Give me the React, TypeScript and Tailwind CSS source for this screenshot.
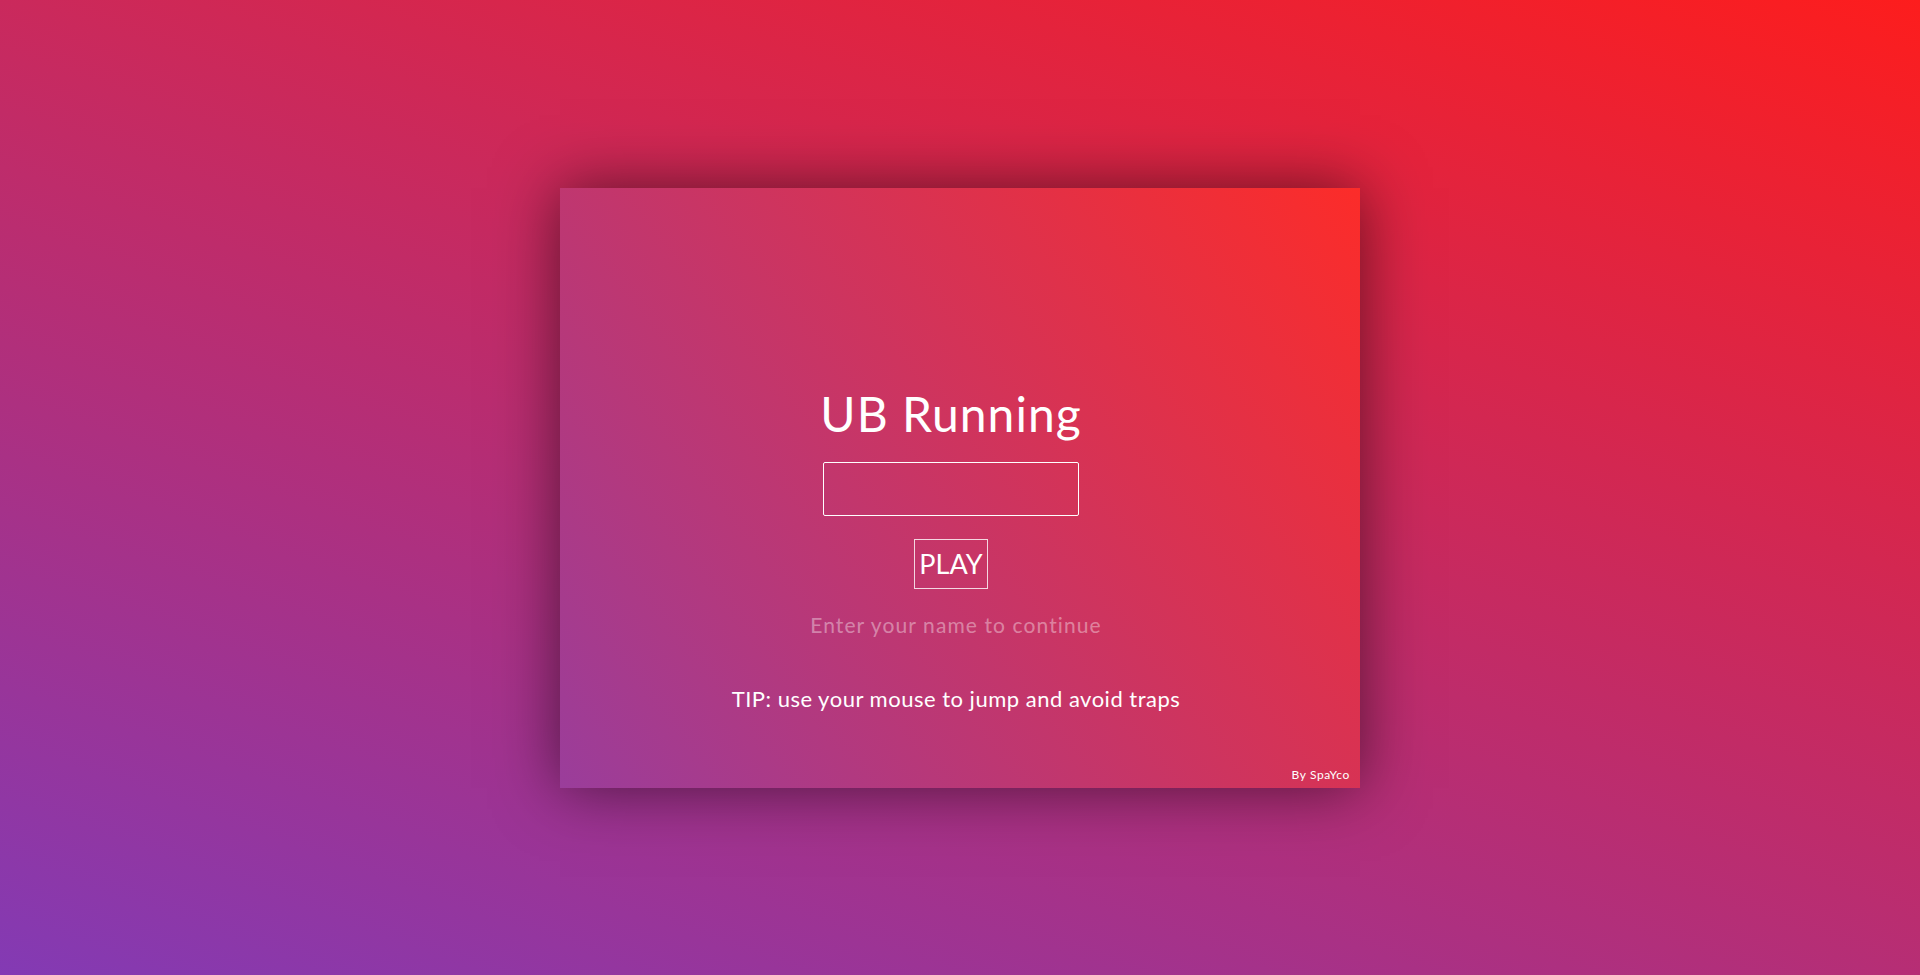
import { useState } from "react";

const App = () => {
  const [name, setName] = useState("");

  return (
    <div className="w-full h-[975px] flex items-center justify-center bg-[linear-gradient(20deg,#833ab4,#fd1d1d)] font-['Lato',sans-serif]">
      {/* Game card */}
      <div className="w-[800px] h-[600px] flex flex-col bg-[linear-gradient(51deg,#9a3d9b,#fc2c29)] shadow-[0_0_60px_rgba(0,0,0,0.55)]">
        <div className="flex flex-col items-center pt-[202px] pr-[18px]">
          <h1 className="text-[48px] leading-[48px] tracking-[1px] text-white">UB Running</h1>
          <input
            type="text"
            title="Name"
            className="mt-[24px] w-[256px] h-[54px] px-3 bg-transparent border border-white rounded-[2px] text-white text-[22px] outline-none"
            value={name}
            onChange={(e) => setName(e.target.value)}
          />
          <button
            type="button"
            className="mt-[23px] w-[74px] h-[50px] border border-white/80 text-white text-[27px] leading-none"
          >
            PLAY
          </button>
        </div>
        <div className="flex flex-col items-center pr-[8px]">
          <p className="mt-[25px] text-[21px] leading-[21px] tracking-[1.1px] text-white/40">
            Enter your name to continue
          </p>
          <p className="mt-[53px] text-[22px] leading-[22px] tracking-[0.5px] text-white">
            TIP: use your mouse to jump and avoid traps
          </p>
        </div>
        <p className="mt-auto self-end pr-[10px] pb-[7px] text-[12px] leading-[12px] tracking-[0.6px] text-white">
          By SpaYco
        </p>
      </div>
    </div>
  );
};

export default App;
